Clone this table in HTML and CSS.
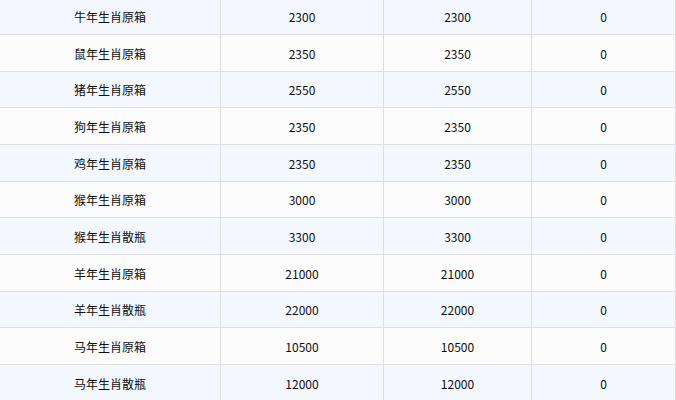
FILE: index.html
```html
<!DOCTYPE html>
<html lang="zh-CN">
<head>
<meta charset="utf-8">
<link rel="stylesheet" href="styles.css">
</head>
<body>
<div class="table">
  <div class="row stripe"><div class="cell">牛年生肖原箱</div><div class="cell">2300</div><div class="cell">2300</div><div class="cell">0</div></div>
  <div class="row"><div class="cell">鼠年生肖原箱</div><div class="cell">2350</div><div class="cell">2350</div><div class="cell">0</div></div>
  <div class="row stripe"><div class="cell">猪年生肖原箱</div><div class="cell">2550</div><div class="cell">2550</div><div class="cell">0</div></div>
  <div class="row"><div class="cell">狗年生肖原箱</div><div class="cell">2350</div><div class="cell">2350</div><div class="cell">0</div></div>
  <div class="row stripe"><div class="cell">鸡年生肖原箱</div><div class="cell">2350</div><div class="cell">2350</div><div class="cell">0</div></div>
  <div class="row"><div class="cell">猴年生肖原箱</div><div class="cell">3000</div><div class="cell">3000</div><div class="cell">0</div></div>
  <div class="row stripe"><div class="cell">猴年生肖散瓶</div><div class="cell">3300</div><div class="cell">3300</div><div class="cell">0</div></div>
  <div class="row"><div class="cell">羊年生肖原箱</div><div class="cell">21000</div><div class="cell">21000</div><div class="cell">0</div></div>
  <div class="row stripe"><div class="cell">羊年生肖散瓶</div><div class="cell">22000</div><div class="cell">22000</div><div class="cell">0</div></div>
  <div class="row"><div class="cell">马年生肖原箱</div><div class="cell">10500</div><div class="cell">10500</div><div class="cell">0</div></div>
  <div class="row stripe"><div class="cell">马年生肖散瓶</div><div class="cell">12000</div><div class="cell">12000</div><div class="cell">0</div></div>
</div>
</body>
</html>
```
FILE: styles.css
```css
html, body {
  margin: 0;
  padding: 0;
  background: #fcfcfc;
  overflow: hidden;
}
.table {
  width: 676px;
  margin-top: -1.67px;
  font-family: "Noto Sans CJK SC", "Microsoft YaHei", sans-serif;
  font-size: 12px;
  color: #0d0d0d;
}
.row {
  display: grid;
  grid-template-columns: 221px 163px 148px 144px;
  height: 36.667px;
  box-sizing: border-box;
  border-bottom: 1px solid #dfdfdf;
  background: #fcfcfc;
}
.row.stripe {
  background: #f4f8fe;
}
.cell {
  display: flex;
  align-items: center;
  justify-content: center;
  padding-top: 2px;
  border-right: 1px solid #dfdfdf;
  box-sizing: border-box;
  line-height: 1;
}
```
